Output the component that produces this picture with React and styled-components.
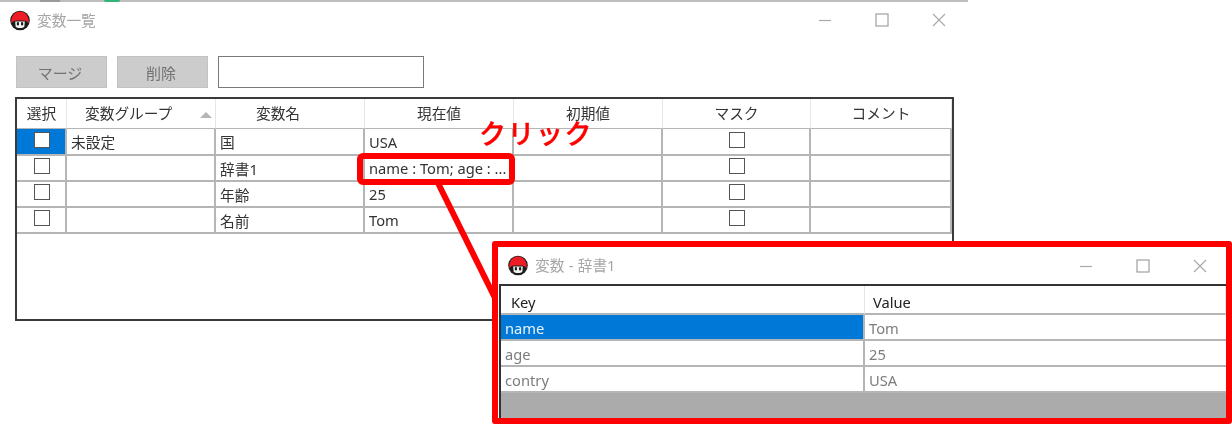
import React from 'react';
import styled, { createGlobalStyle } from 'styled-components';

const GlobalStyle = createGlobalStyle`
  html, body {
    margin: 0;
    background: #fff;
  }
  body {
    font-family: "Noto Sans", "Noto Sans CJK JP", sans-serif;
    font-size: 14.5px;
    color: #333;
  }
  * {
    box-sizing: border-box;
  }
`;

// the reference is a slightly upscaled capture, so everything is a little soft
const Page = styled.div`
  position: relative;
  width: 1232px;
  height: 424px;
  overflow: hidden;
  background: #fff;
  filter: blur(0.35px);
`;

const MainWindow = styled.section`
  width: 968px;
  padding-bottom: 8px;
`;

const TopStrip = styled.div`
  display: flex;
  align-items: flex-start;
  height: 2px;
  background: #bdbdbd;
`;

const StripTab = styled.span`
  width: ${p => p.$width}px;
  height: ${p => p.$height}px;
  margin-left: ${p => p.$left}px;
  background: ${p => p.$color};
  border-radius: ${p => p.$round ? '0 0 6px 6px' : '0'};
`;

const TitleBar = styled.header`
  display: flex;
  align-items: center;
  gap: ${p => p.$gap}px;
  height: ${p => p.$height}px;
  padding-left: ${p => p.$left}px;
`;

const TitleText = styled.span`
  flex: 1;
  font-size: 14.7px;
  color: #a6a6a6;
  padding-bottom: 1px;
`;

const Controls = styled.div`
  display: flex;
  align-items: center;
  gap: ${p => p.$gap}px;
  padding-right: ${p => p.$right}px;
`;

const Toolbar = styled.div`
  display: flex;
  gap: 10px;
  margin: 18px 0 9px 16px;
  height: 32px;
`;

const GrayButton = styled.button`
  width: 91px;
  height: 32px;
  padding: 0 3px 0 0;
  border: 1px solid #c2c2c2;
  background: #cccccc;
  color: #727272;
  font: inherit;
  font-size: 15px;
`;

const SearchBox = styled.input`
  width: 206px;
  height: 32px;
  border: 1.5px solid #7a7a7a;
  background: #fff;
`;

const VariableTable = styled.div`
  display: grid;
  grid-template-columns: 50px 149px 149px 149px 149px 148px 141px;
  grid-template-rows: 30px 27px repeat(3, 26px);
  align-content: start;
  width: 939px;
  height: 224px;
  margin-left: 15px;
  border: 2px solid #3a3a3a;
`;

const HeadCell = styled.div`
  position: relative;
  display: flex;
  align-items: center;
  justify-content: ${p => p.$align || 'center'};
  padding-left: ${p => p.$pad || 0}px;
  padding-right: ${p => p.$padRight || 0}px;
  padding-bottom: 2px;
  border-right: 1.5px solid #e6e6e6;
  border-bottom: 1.5px solid #b5b5b5;
  color: #333;
  font-size: 14.7px;
  white-space: nowrap;
`;

const SortArrow = styled.i`
  position: absolute;
  right: 3px;
  top: 13px;
  width: 0;
  height: 0;
  border-left: 6px solid transparent;
  border-right: 6px solid transparent;
  border-bottom: 6px solid #b5b5b5;
`;

const Cell = styled.div`
  display: flex;
  align-items: center;
  justify-content: ${p => p.$center ? 'center' : 'flex-start'};
  padding-left: ${p => p.$center ? 1 : 4}px;
  padding-bottom: ${p => p.$center ? 4 : 0}px;
  background: ${p => p.$selected ? '#0078d7' : 'transparent'};
  border-right: 2px solid #b5b5b5;
  border-bottom: 2px solid #b5b5b5;
  color: #333;
  font-size: 14.7px;
  white-space: nowrap;
  overflow: hidden;
`;

const Check = styled.span`
  display: block;
  width: 16px;
  height: 16px;
  background: #fff;
  border: 1.5px solid #555;
`;

const Popup = styled.aside`
  position: absolute;
  left: 492px;
  top: 241px;
  display: flex;
  flex-direction: column;
  width: 740px;
  height: 183px;
  background: #fff;
  border: 6px solid #ff0000;
  border-radius: 3px;
`;

const PopupTitle = styled(TitleText)`
  word-spacing: 0.5px;
  padding-bottom: 2px;
`;

const DictTable = styled.div`
  flex: 1;
  display: grid;
  grid-template-columns: 364px 1fr;
  grid-template-rows: 29px repeat(3, 26px) 1fr;
  margin-left: 1px;
  border-top: 2px solid #333;
  border-left: 2px solid #333;
`;

const DictHead = styled.div`
  display: flex;
  align-items: center;
  padding-left: ${p => p.$pad}px;
  padding-top: 4px;
  border-right: 1.5px solid #e6e6e6;
  border-bottom: 2px solid #b5b5b5;
  color: #222;
  font-size: 14.7px;
`;

const DictCell = styled.div`
  display: flex;
  align-items: center;
  padding-left: 4px;
  padding-top: 2px;
  background: ${p => p.$selected ? '#0078d7' : 'transparent'};
  border-right: ${p => p.$last ? 'none' : '2px solid #b5b5b5'};
  border-bottom: 2px solid #b5b5b5;
  color: ${p => p.$selected ? '#e8f2fb' : '#7d7d7d'};
  font-size: 14.7px;
`;

const DictFill = styled.div`
  grid-column: 1 / -1;
  background: #ababab;
`;

const Highlight = styled.div`
  position: absolute;
  left: 357px;
  top: 153px;
  width: 158px;
  height: 32px;
  border: 6px solid #ff0000;
  border-radius: 6px;
`;

const Connector = styled.svg`
  position: absolute;
  left: 420px;
  top: 175px;
  width: 90px;
  height: 135px;
`;

const ClickLabel = styled.div`
  position: absolute;
  left: 479px;
  top: 123px;
  color: #ff0000;
  font-family: "Noto Sans CJK JP", sans-serif;
  font-size: 27px;
  font-weight: 500;
  -webkit-text-stroke: 0.4px #ff0000;
  letter-spacing: 1.5px;
  line-height: 20px;
  white-space: nowrap;
`;

function AppIcon() {
  return (
    <svg width="20" height="21" viewBox="0 0 20 21">
      <circle cx="10" cy="10.5" r="9.8" fill="#1d1d1d" />
      <path d="M1.2 13.2 C0.8 5.5 5 1.4 10 1.4 C15 1.4 19.2 5.5 18.8 13.2 C17.2 11.4 15.6 10.6 14 10.6 H6 C4.4 10.6 2.8 11.4 1.2 13.2 Z" fill="#ee1c25" />
      <path d="M5.2 11.6 H14.8 L14.4 16.4 C13 18.6 7 18.6 5.6 16.4 Z" fill="#f4f4f4" />
      <rect x="6.8" y="12" width="2.2" height="3.6" rx="1.1" fill="#1d1d1d" />
      <rect x="11" y="12" width="2.2" height="3.6" rx="1.1" fill="#1d1d1d" />
    </svg>
  );
}

function WindowControls({ gap, right }) {
  return (
    <Controls $gap={gap} $right={right}>
      <svg width="14" height="14" viewBox="0 0 14 14">
        <path d="M1 7.5 H13" stroke="#a8a8a8" strokeWidth="1.2" />
      </svg>
      <svg width="14" height="14" viewBox="0 0 14 14">
        <rect x="1" y="1" width="12" height="12" fill="none" stroke="#a0a0a0" strokeWidth="1.2" />
      </svg>
      <svg width="14" height="14" viewBox="0 0 14 14">
        <path d="M1 1 L13 13 M13 1 L1 13" stroke="#a8a8a8" strokeWidth="1.1" />
      </svg>
    </Controls>
  );
}

const columns = [
  { label: '選択' },
  { label: '変数グループ', sorted: true, align: 'flex-start', pad: 18 },
  { label: '変数名', padRight: 24 },
  { label: '現在値' },
  { label: '初期値' },
  { label: 'マスク' },
  { label: 'コメント' }
];

const rows = [
  { group: '未設定', name: '国', value: 'USA', selected: true },
  { group: '', name: '辞書1', value: 'name : Tom; age : ...' },
  { group: '', name: '年齢', value: '25' },
  { group: '', name: '名前', value: 'Tom' }
];

const dict = [
  { key: 'name', value: 'Tom', selected: true },
  { key: 'age', value: '25' },
  { key: 'contry', value: 'USA' }
];

export default function App() {
  return (
    <Page>
      <GlobalStyle />
      <MainWindow>
        <TopStrip>
          <StripTab $left={40} $width={20} $height={2} $color="#9a9a9a" />
          <StripTab $left={44} $width={16} $height={2} $color="#2fb57a" $round />
        </TopStrip>
        <TitleBar $gap={7} $height={36} $left={10}>
          <AppIcon />
          <TitleText>変数一覧</TitleText>
          <WindowControls gap={43} right={22} />
        </TitleBar>
        <Toolbar>
          <GrayButton>マージ</GrayButton>
          <GrayButton>削除</GrayButton>
          <SearchBox />
        </Toolbar>
        <VariableTable>
          {columns.map(col => (
            <HeadCell key={col.label} $align={col.align} $pad={col.pad} $padRight={col.padRight}>
              {col.label}
              {col.sorted && <SortArrow />}
            </HeadCell>
          ))}
          {rows.map(row => (
            <React.Fragment key={row.name}>
              <Cell $center $selected={row.selected}><Check /></Cell>
              <Cell>{row.group}</Cell>
              <Cell>{row.name}</Cell>
              <Cell>{row.value}</Cell>
              <Cell />
              <Cell $center><Check /></Cell>
              <Cell />
            </React.Fragment>
          ))}
        </VariableTable>
      </MainWindow>

      <ClickLabel>クリック</ClickLabel>
      <Highlight />
      <Connector viewBox="0 0 90 135">
        <path d="M18 8 L76 125" stroke="#ff0000" strokeWidth="6" fill="none" />
      </Connector>

      <Popup>
        <TitleBar $gap={7} $height={37} $left={10}>
          <AppIcon />
          <PopupTitle>変数 - 辞書1</PopupTitle>
          <WindowControls gap={43} right={19} />
        </TitleBar>
        <DictTable>
          <DictHead $pad={10}>Key</DictHead>
          <DictHead $pad={8}>Value</DictHead>
          {dict.map(item => (
            <React.Fragment key={item.key}>
              <DictCell $selected={item.selected}>{item.key}</DictCell>
              <DictCell $last>{item.value}</DictCell>
            </React.Fragment>
          ))}
          <DictFill />
        </DictTable>
      </Popup>
    </Page>
  );
}
